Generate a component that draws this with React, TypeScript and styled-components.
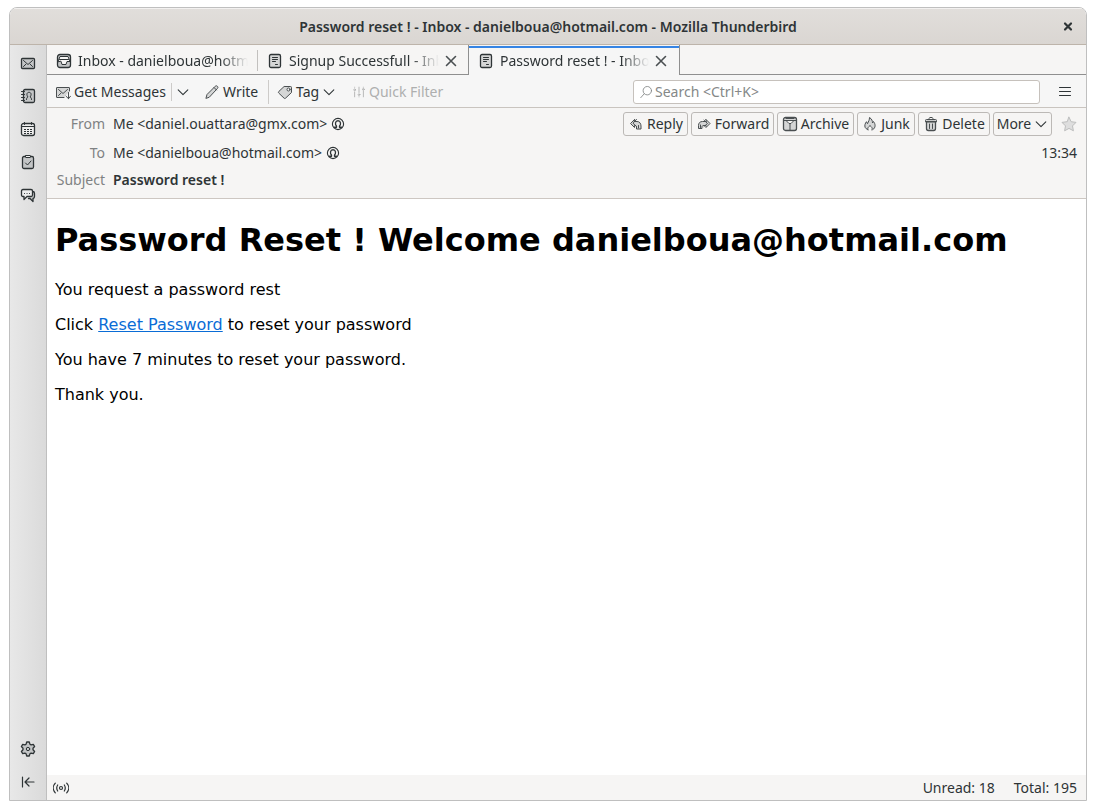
import React from "react";
import styled, { createGlobalStyle, css } from "styled-components";

const GlobalStyle = createGlobalStyle`
  * { box-sizing: border-box; }
  body {
    margin: 0;
    background: #fff;
    color: #2e3436;
    font: 14px/20px "Noto Sans", "Open Sans", sans-serif;
  }
  button, input { font: inherit; color: inherit; }
  button { padding: 0; border: 0; background: none; }
`;

const Desktop = styled.div`
  display: flex;
  min-height: 100vh;
  padding: 7px 9px 9px;
`;

const Window = styled.div`
  flex: 1;
  min-width: 0;
  display: flex;
  flex-direction: column;
  overflow: hidden;
  border: 1px solid #bfbfbf;
  border-radius: 8px 8px 0 0;
`;

const TitleBar = styled.header`
  display: grid;
  grid-template-columns: 1fr auto 1fr;
  align-items: center;
  height: 37px;
  padding-top: 1px;
  border-bottom: 1px solid #bdb4aa;
  background: linear-gradient(#e1dedb, #dad6d2);
  box-shadow: inset 0 1px #f3f1f0;
`;

const WindowTitle = styled.div`
  grid-column: 2;
  font-weight: 600;
  white-space: nowrap;
`;

const WindowClose = styled.button`
  justify-self: end;
  display: flex;
  margin-right: 10px;
`;

const Body = styled.div`
  flex: 1;
  display: flex;
  min-height: 0;
`;

const Spaces = styled.nav`
  display: flex;
  flex-direction: column;
  align-items: center;
  gap: 17px;
  width: 37px;
  padding: 10px 0;
  border-right: 1px solid #bfbfbf;
  background: linear-gradient(90deg, #e8e8e8, #dadada);
`;

const SpaceButton = styled.button<{ $bottom?: boolean }>`
  display: flex;
  ${(p) => p.$bottom && css`margin-top: auto;`}
`;

const Main = styled.main`
  flex: 1;
  min-width: 0;
  display: flex;
  flex-direction: column;
`;

const TabStrip = styled.div`
  display: flex;
  height: 30px;
  background: #f6f5f4;
  box-shadow: inset 0 -1px #8f8f8f;
`;

const Tab = styled.div<{ $active?: boolean }>`
  display: flex;
  align-items: center;
  gap: 4px;
  width: 211px;
  padding: 2px 10px 0 9px;
  ${(p) =>
    p.$active &&
    css`
      width: 212px;
      margin-left: -1px;
      border: solid #8f8f8f;
      border-width: 0 1px;
      background: #f6f6f6;
      box-shadow: inset 0 1px #f6f5f4, inset 0 3px #3584e4;
    `}
`;

const TabDivider = styled.div`
  width: 1px;
  height: 21px;
  margin: 5px 0 0 -1px;
  background: #c2c0be;
`;

const TabLabel = styled.button`
  flex: 1;
  min-width: 0;
  padding-left: 2px;
  overflow: hidden;
  text-align: left;
  white-space: nowrap;
  mask-image: linear-gradient(90deg, #000 calc(100% - 28px), transparent);
`;

const IconButton = styled.button`
  display: flex;
`;

const Toolbar = styled.div`
  display: flex;
  align-items: center;
  height: 33px;
  padding: 1px 13px 0 8px;
  border-bottom: 1px solid #c9c4bf;
  background: #f6f6f6;
`;

const Tools = styled.div`
  flex: 1;
  display: flex;
  align-items: center;
`;

const ToolButton = styled.button<{ $muted?: boolean; $width: number }>`
  display: flex;
  align-items: center;
  gap: 3px;
  min-width: ${(p) => p.$width}px;
  white-space: nowrap;
  color: ${(p) => (p.$muted ? "#aeafaf" : "inherit")};
`;

const ToolDivider = styled.div<{ $tall?: boolean }>`
  width: 1px;
  height: ${(p) => (p.$tall ? 24 : 18)}px;
  margin: 0 ${(p) => (p.$tall ? 8 : 4)}px;
  background: #cdcbc9;
`;

const SearchBox = styled.label`
  flex: 0 1 407px;
  display: flex;
  align-items: center;
  gap: 2px;
  height: 24px;
  margin-right: 17px;
  padding: 0 5px;
  border: 1px solid #c6c1bc;
  border-radius: 3px;
  background: #fff;
  color: #858888;
`;

const SearchInput = styled.input`
  flex: 1;
  min-width: 0;
  padding: 0;
  border: 0;
  outline: 0;
  background: none;
  &::placeholder { color: #858888; opacity: 1; }
`;

const MessageHeader = styled.section`
  display: grid;
  grid-template-columns: 50px 1fr auto;
  grid-template-rows: 31px 27px 27px;
  align-items: center;
  column-gap: 8px;
  height: 91px;
  padding: 0 9px 0 8px;
  border-bottom: 1px solid #cdc7c2;
  background: #f6f5f4;
`;

const FieldName = styled.span`
  text-align: right;
  color: #7f8283;
`;

const FieldValue = styled.span`
  display: flex;
  align-items: center;
  gap: 4px;
  white-space: nowrap;
`;

const Subject = styled.strong`
  font-weight: 600;
`;

const Actions = styled.div`
  display: flex;
  align-items: center;
  gap: 3px;
`;

const ActionButton = styled.button<{ $width: number }>`
  display: flex;
  align-items: center;
  justify-content: center;
  gap: 3px;
  min-width: ${(p) => p.$width}px;
  height: 24px;
  border: 1px solid #bcb9b6;
  border-radius: 3px;
  white-space: nowrap;
`;

const StarButton = styled.button`
  display: flex;
  margin-left: 6px;
`;

const Time = styled.time`
  text-align: right;
`;

const Mail = styled.article`
  flex: 1;
  padding: 0 8px;
  background: #fff;
  color: #000;
  font: 16px/19px "DejaVu Sans", sans-serif;

  h1 { margin: 22px 0 21px; font-size: 32px; line-height: 38px; }
  p { margin: 16px 0; }
  a { color: #0a6cd6; }
`;

const StatusBar = styled.footer`
  display: flex;
  align-items: center;
  gap: 19px;
  height: 25px;
  padding: 0 9px 0 6px;
  background: #f6f5f4;
`;

const StatusIcon = styled.span`
  display: flex;
  margin-right: auto;
`;

type IconProps = { children: React.ReactNode; size?: number; color?: string; line?: number };

const Icon = ({ children, size = 16, color = "#2e3436", line = 1 }: IconProps) => (
  <svg
    width={size}
    height={size}
    viewBox="0 0 16 16"
    fill="none"
    stroke={color}
    strokeWidth={line}
    strokeLinecap="round"
    strokeLinejoin="round"
    aria-hidden="true"
  >
    {children}
  </svg>
);

const SHADE = "#c3c5c6";

const MailIcon = () => (
  <Icon>
    <rect x="1.500" y="3.500" width="13" height="10" rx="1" fill={SHADE} strokeWidth="1.300" />
    <path d="M3.500 5.500 8 9.500l4.500-4M3.500 11.500l2.400-2.300M12.500 11.500l-2.400-2.300" />
  </Icon>
);
const AddressIcon = () => (
  <Icon>
    <rect x="3.500" y="1.500" width="11" height="13" rx="1.500" fill={SHADE} strokeWidth="1.300" />
    <path d="M1.500 3.500h3M1.500 6.500h3M1.500 9.500h3M1.500 12.500h3" />
    <path d="M6.500 11.500c0-1.500.5-2 1.500-2.500-1-1.200-1.200-2.300-1-3.200.2-1 1-1.500 2-1.500s1.800.5 2 1.500c.2.900 0 2-1 3.200 1 .5 1.500 1 1.500 2.500" />
  </Icon>
);
const CalendarIcon = () => (
  <Icon>
    <rect x="1.500" y="2.500" width="13" height="12" rx="2" strokeWidth="1.300" fill="#eeeeee" />
    <path d="M1.500 5.500h13M4.500 1.500v2M11.500 1.500v2" />
    <path d="M4 8.500h9M4 10.500h9M4 12.500h9" strokeDasharray="2 1" strokeLinecap="butt" />
  </Icon>
);
const TasksIcon = () => (
  <Icon>
    <rect x="2.500" y="2.500" width="11" height="12" rx="1.500" fill={SHADE} strokeWidth="1.300" />
    <rect x="5.500" y="1.500" width="5" height="2" rx=".5" fill="#eee" />
    <path d="m5.500 9 2 2 3.500-4" />
  </Icon>
);
const ChatIcon = () => (
  <Icon>
    <path d="M13 4.500c1 .2 1.500 1 1.500 2v3c0 1-.6 1.800-1.500 2v3l-3-3H8.500" fill={SHADE} strokeWidth="1.300" />
    <path d="M3 2.500h8c1 0 1.500.7 1.500 1.500v4c0 1-.5 1.500-1.500 1.500H7l-3 3v-3H3c-1 0-1.500-.6-1.500-1.500V4c0-.9.500-1.500 1.500-1.500Z" fill="#eee" strokeWidth="1.300" />
    <path d="M4.500 6.500h.1M7 6.500h.1M9.500 6.500h.1" />
  </Icon>
);
const GearIcon = () => (
  <Icon>
    <path
      d="M6.700 1h2.600l.6 2.200 1.200.7 2.200-.6 1.300 2.200-1.600 1.700v1.600l1.600 1.700-1.300 2.200-2.200-.6-1.200.7-.6 2.200H6.700l-.6-2.200-1.200-.7-2.200.6-1.300-2.200L3 8.800V7.200L1.400 5.500l1.300-2.200 2.200.6 1.200-.7Z"
      fill={SHADE}
      strokeWidth="1.300"
    />
    <circle cx="8" cy="8" r="1.700" />
  </Icon>
);
const CollapseIcon = () => (
  <Icon line={1.200}>
    <path d="M2.500 3v10M14 8H5M9 4 5 8l4 4" />
  </Icon>
);
const InboxIcon = () => (
  <Icon>
    <rect x="1.500" y="1.500" width="13" height="13" rx="2.500" fill={SHADE} strokeWidth="1.300" />
    <path d="m2 8.500 2-5h8l2 5h-3l-1 3H6l-1-3Z" fill="#f6f5f4" />
    <path d="M3.500 6.500h9" />
  </Icon>
);
const MessageIcon = () => (
  <Icon>
    <rect x="2.500" y="1.500" width="11" height="13" rx="1.500" fill="#d5d6d6" strokeWidth="1.300" />
    <path d="M5.500 4.500h5M5.500 6.500h5M5.500 8.500h3M8.500 11.500h2" />
  </Icon>
);
const CrossIcon = () => (
  <Icon color="#4a4f51" line={1.600}>
    <path d="m3.500 3.500 9 9M12.500 3.500l-9 9" />
  </Icon>
);
const WindowCrossIcon = () => (
  <Icon line={2.200}>
    <path d="m5 4.500 6 6M11 4.500l-6 6" />
  </Icon>
);
const GetMailIcon = () => (
  <Icon color="#4a4f51">
    <path d="M9 13.500H2c-.4 0-.5-.1-.5-.5V4c0-.4.1-.5.5-.5h12c.4 0 .5.1.5.500v3" fill="#d5d6d6" />
    <path d="M3.500 5.500 8 9.500l4.500-4M3.500 11.500l2.400-2.300M13.500 8.500v6M11 12.200l2.500 2.500 2-2.500" />
  </Icon>
);
const ChevronIcon = () => (
  <Icon size={14}>
    <path d="M2.500 5.500 8 11l5.500-5.500" strokeWidth="1.200" />
  </Icon>
);
const PencilIcon = () => (
  <Icon color="#4a4f51">
    <path d="m2 14 1-3.500 8.200-8.200c.7-.7 1.500-.7 2.200 0 .7.700.7 1.500 0 2.200L5.500 13Z" fill="#d5d6d6" />
    <path d="m10 3.500 2.500 2.500" />
  </Icon>
);
const TagIcon = () => (
  <Icon color="#4a4f51">
    <path d="M7.500 2.500h6c.7 0 1 .3 1 1v5l-6 5.700c-.5.400-1 .4-1.400 0L1.700 9c-.4-.5-.4-1 0-1.400Z" fill="#d5d6d6" />
    <circle cx="11.500" cy="5.500" r="1.500" fill="#f6f6f6" />
  </Icon>
);
const FilterIcon = () => (
  <Icon size={14} color="#aeafaf">
    <path d="M3 2.500v.1M3 8v5.500M8 2.500v6M8 13.500v.1M13 2.500v.1M13 7v6.500" />
    <circle cx="3" cy="5.500" r="1" />
    <circle cx="8" cy="11" r="1" />
    <circle cx="13" cy="5" r="1" />
  </Icon>
);
const SearchIcon = () => (
  <Icon size={14} color="#858888">
    <circle cx="9.500" cy="6.500" r="4.800" />
    <path d="M6 10l-4 4.500" />
  </Icon>
);
const MenuIcon = () => (
  <Icon>
    <path d="M2.500 3.500h11M2.500 7.500h11M2.500 11.500h11" />
  </Icon>
);
const ContactIcon = () => (
  <Icon size={14}>
    <circle cx="8" cy="8" r="6.400" strokeWidth="1.300" />
    <path d="M4 11.700h2.300v-1.500C4.500 8.500 4.500 4.300 8 4.300s3.500 4.200 1.700 5.900v1.500H12" strokeWidth="1.500" />
  </Icon>
);
const ReplyIcon = () => (
  <Icon color="#4a4f51">
    <path d="M6.500 3.500 2.500 7.500l4 4V9.500c1.500 0 2 .5 2 1.500v2h4.500v-3c0-2.500-1.500-4.500-4-4.500H6.500Z" fill="#d5d6d6" />
    <path d="M8.500 3.500 5 7.200l3.500 3.300M10.500 12V9.500" />
  </Icon>
);
const ForwardIcon = () => (
  <Icon color="#4a4f51">
    <path d="m10 3.500 4 4-4 4V9.500H8c-1.500 0-2 .5-2 1.500v1.500H2.500V9.500c0-2.500 1.500-4 4-4H10Z" fill="#d5d6d6" />
    <path d="m8 4.200 3.500 3.300L8 10.500M4.500 11.500V9" />
  </Icon>
);
const ArchiveIcon = () => (
  <Icon color="#4a4f51">
    <rect x="1.500" y="1.500" width="13" height="13" rx="2" fill="#d5d6d6" strokeWidth="1.300" />
    <path d="M2 4.500h12M4 2.500h8M4 4.500l3 3h2l3-3" fill="#f6f5f4" />
    <path d="M8 8.500v5.500" strokeDasharray="1 1" strokeWidth="2" strokeLinecap="butt" />
  </Icon>
);
const JunkIcon = () => (
  <Icon color="#4a4f51">
    <path d="M5.500 13.500C3 12.500 2.500 10.500 3 8.500c.2-1 .8-2 1.500-2.800l1 2C6.500 5.500 7.500 4 7.500 1.500c2.500 1.500 3 3.500 3 5.500l1-1.500c2 2.500 2.500 6-.5 8" fill="#d5d6d6" />
    <path d="M6 14c-1-2 .5-3 2-4.500 1.500 1.500 3 2.500 2 4.500" fill="#f6f5f4" />
  </Icon>
);
const TrashIcon = () => (
  <Icon color="#4a4f51">
    <path d="M3.500 5.500h9v7c0 1.200-.6 2-1.800 2H5.300c-1.200 0-1.800-.8-1.800-2Z" fill="#d5d6d6" strokeWidth="1.300" />
    <path d="M2.500 5.500v-1c0-.7.300-1 1-1h9c.7 0 1 .3 1 1v1ZM6 3c0-1 .5-1.500 1-1.500h2c.5 0 1 .5 1 1.500M6.500 8v4.500M9.500 8v4.500" />
  </Icon>
);
const StarIcon = () => (
  <Icon color="#bcbdbd">
    <path d="m8 1.200 2.100 4.500 4.900.7-3.500 3.500.9 4.900L8 12.400l-4.400 2.400.9-4.900L1 6.400l4.900-.7Z" fill="#dedede" />
  </Icon>
);
const OnlineIcon = () => (
  <Icon line={1.200}>
    <circle cx="8" cy="8" r="1.500" />
    <path d="M4.700 5c-1.300 2-1.300 4 0 6M11.300 5c1.300 2 1.300 4 0 6M2.300 3.200C-.3 6-.3 10 2.300 12.800M13.700 3.200c2.600 2.800 2.600 6.800 0 9.600" />
  </Icon>
);

const actions = [
  { label: "Reply", icon: <ReplyIcon />, width: 65 },
  { label: "Forward", icon: <ForwardIcon />, width: 83 },
  { label: "Archive", icon: <ArchiveIcon />, width: 77 },
  { label: "Junk", icon: <JunkIcon />, width: 58 },
  { label: "Delete", icon: <TrashIcon />, width: 72 },
];

export default function App() {
  return (
    <Desktop>
      <GlobalStyle />
      <Window>
        <TitleBar>
          <WindowTitle>Password reset ! - Inbox - danielboua@hotmail.com - Mozilla Thunderbird</WindowTitle>
          <WindowClose aria-label="Close window"><WindowCrossIcon /></WindowClose>
        </TitleBar>
        <Body>
          <Spaces aria-label="Spaces">
            <SpaceButton aria-label="Mail"><MailIcon /></SpaceButton>
            <SpaceButton aria-label="Address Book"><AddressIcon /></SpaceButton>
            <SpaceButton aria-label="Calendar"><CalendarIcon /></SpaceButton>
            <SpaceButton aria-label="Tasks"><TasksIcon /></SpaceButton>
            <SpaceButton aria-label="Chat"><ChatIcon /></SpaceButton>
            <SpaceButton $bottom aria-label="Settings"><GearIcon /></SpaceButton>
            <SpaceButton aria-label="Collapse"><CollapseIcon /></SpaceButton>
          </Spaces>
          <Main>
            <TabStrip>
              <Tab>
                <InboxIcon />
                <TabLabel>Inbox - danielboua@hotmail.com</TabLabel>
              </Tab>
              <TabDivider />
              <Tab>
                <MessageIcon />
                <TabLabel>Signup Successfull - Inbox</TabLabel>
                <IconButton aria-label="Close tab"><CrossIcon /></IconButton>
              </Tab>
              <Tab $active>
                <MessageIcon />
                <TabLabel>Password reset ! - Inbox</TabLabel>
                <IconButton aria-label="Close tab"><CrossIcon /></IconButton>
              </Tab>
            </TabStrip>
            <Toolbar>
              <Tools>
                <ToolButton $width={112}><GetMailIcon />Get Messages</ToolButton>
                <ToolDivider />
                <ToolButton $width={28} aria-label="Get messages options"><ChevronIcon /></ToolButton>
                <ToolButton $width={56}><PencilIcon />Write</ToolButton>
                <ToolDivider $tall />
                <ToolButton $width={75}><TagIcon />Tag<ChevronIcon /></ToolButton>
                <ToolButton $width={95} $muted><FilterIcon />Quick Filter</ToolButton>
              </Tools>
              <SearchBox>
                <SearchIcon />
                <SearchInput type="text" aria-label="Search" placeholder="Search <Ctrl+K>" />
              </SearchBox>
              <IconButton aria-label="Application menu"><MenuIcon /></IconButton>
            </Toolbar>
            <MessageHeader>
              <FieldName>From</FieldName>
              <FieldValue>Me &lt;daniel.ouattara@gmx.com&gt; <ContactIcon /></FieldValue>
              <Actions>
                {actions.map((a) => (
                  <ActionButton key={a.label} $width={a.width}>{a.icon}{a.label}</ActionButton>
                ))}
                <ActionButton $width={59}>More<ChevronIcon /></ActionButton>
                <StarButton aria-label="Star"><StarIcon /></StarButton>
              </Actions>
              <FieldName>To</FieldName>
              <FieldValue>Me &lt;danielboua@hotmail.com&gt; <ContactIcon /></FieldValue>
              <Time>13:34</Time>
              <FieldName>Subject</FieldName>
              <Subject>Password reset !</Subject>
            </MessageHeader>
            <Mail>
              <h1>Password Reset ! Welcome danielboua@hotmail.com</h1>
              <p>You request a password rest</p>
              <p>Click <a href="#reset">Reset Password</a> to reset your password</p>
              <p>You have 7 minutes to reset your password.</p>
              <p>Thank you.</p>
            </Mail>
            <StatusBar>
              <StatusIcon><OnlineIcon /></StatusIcon>
              <span>Unread: 18</span>
              <span>Total: 195</span>
            </StatusBar>
          </Main>
        </Body>
      </Window>
    </Desktop>
  );
}
